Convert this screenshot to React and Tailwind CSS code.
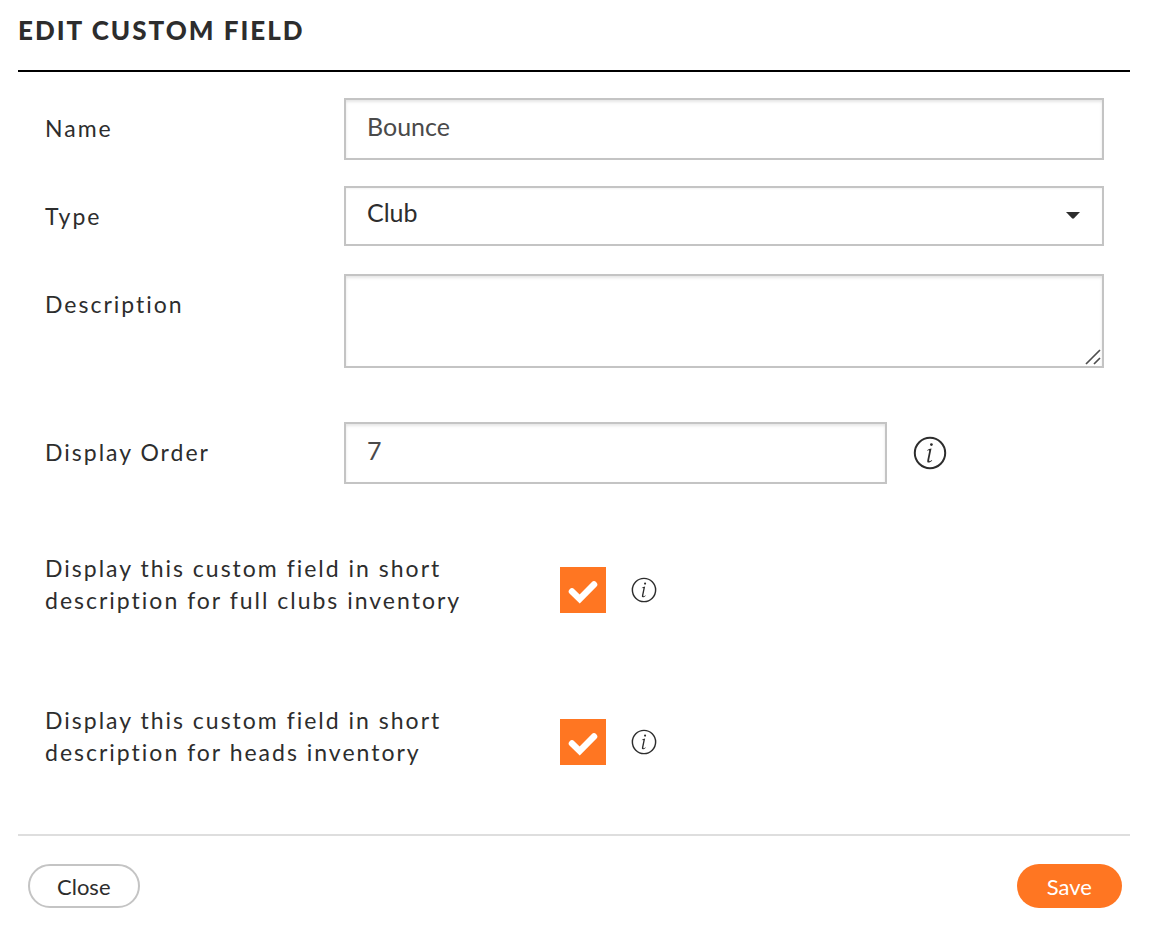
import React, { useState } from 'react';

const labelClass = 'shrink-0 text-[23px] leading-8 tracking-[2px] text-[#2d2d2d]';
const boxClass =
  'block w-full rounded-none border-2 border-[#c4c4c4] bg-white px-[21px] text-[25px] outline-none focus:border-[#ff7622]';

function InfoIcon({ large }) {
  return (
    <svg
      viewBox="0 0 34 34"
      className={large ? 'h-[34px] w-[34px]' : 'h-[26px] w-[26px]'}
      fill="none"
      stroke="#2d2d2d"
      strokeWidth={large ? 2 : 1.9}
      aria-hidden="true"
    >
      <circle cx="17" cy="17" r="15.2" />
      <circle cx="18.4" cy="8.6" r="1.4" fill="#2d2d2d" stroke="none" />
      <path
        d="M14 14.300c1.200-1.100 2.700-1.800 4.500-1.900L16.300 23.300c-.3 1.400-.1 1.900.4 1.900.7 0 1.400-.5 2.200-1.200l.3.500c-1.300 1.400-2.600 2.100-3.700 2.100-1.200 0-1.500-1-1.100-2.900l1.800-8.700c.1-.8-.3-.9-1.900-.2z"
        fill="#2d2d2d"
        stroke="none"
      />
    </svg>
  );
}

function InfoButton({ large }) {
  return (
    <button type="button" aria-label="More information" className="shrink-0 cursor-pointer">
      <InfoIcon large={large} />
    </button>
  );
}

function CheckRow({ id, label, checked, onChange }) {
  return (
    <div className="flex items-start">
      <label htmlFor={id} className={`${labelClass} w-[515px] pr-20`}>
        {label}
      </label>
      <div className="flex items-center gap-[25px] pt-[15px]">
        <span className="relative block h-[46px] w-[46px]">
          <input
            id={id}
            type="checkbox"
            checked={checked}
            onChange={(e) => onChange(e.target.checked)}
            className="block h-full w-full appearance-none border-2 border-[#c4c4c4] bg-white checked:border-[#ff7622] checked:bg-[#ff7622]"
          />
          {checked && (
            <svg viewBox="0 0 46 46" className="pointer-events-none absolute inset-0" fill="none" stroke="#fff" strokeWidth="6.5" aria-hidden="true">
              <path d="M12 24.500L19.700 32L34 17.500" strokeLinecap="round" />
            </svg>
          )}
        </span>
        <InfoButton />
      </div>
    </div>
  );
}

export default function App() {
  const [name, setName] = useState('Bounce');
  const [type, setType] = useState('Club');
  const [description, setDescription] = useState('');
  const [order, setOrder] = useState('7');
  const [inClubs, setInClubs] = useState(true);
  const [inHeads, setInHeads] = useState(true);

  return (
    <form
      onSubmit={(e) => e.preventDefault()}
      className="bg-white pt-3 pr-5 pb-5 pl-[18px] font-['Lato','Open_Sans',sans-serif] text-[#2d2d2d]"
    >
      <h1 className="border-b-2 border-black pb-[22px] text-[26px] leading-9 font-black tracking-[2px] uppercase">
        Edit Custom Field
      </h1>

      <div className="pt-[26px] pr-[26px] pl-[27px]">
        <div className="flex flex-col gap-[26px]">
          <div className="flex items-start">
            <label htmlFor="name" className={`${labelClass} w-[299px] pt-3.5`}>Name</label>
            <input
              id="name"
              type="text"
              value={name}
              onChange={(e) => setName(e.target.value)}
              className={`${boxClass} h-[62px] pb-1.5 text-[#4a4a4a] shadow-[inset_0_2px_3px_rgba(0,0,0,0.1)]`}
            />
          </div>

          <div className="flex items-start">
            <label htmlFor="type" className={`${labelClass} w-[299px] pt-3.5`}>Type</label>
            <div className="relative w-full">
              <select
                id="type"
                value={type}
                onChange={(e) => setType(e.target.value)}
                className={`${boxClass} h-[60px] appearance-none pb-1.5 text-[#2d2d2d] shadow-[inset_0_1px_2px_rgba(0,0,0,0.05)]`}
              >
                <option>Club</option>
              </select>
              <svg viewBox="0 0 14 7" className="pointer-events-none absolute top-[26px] right-6 h-[7px] w-3.5" fill="#2d2d2d" aria-hidden="true">
                <path d="M0 0h14L8 6.300Q7 7 6 6.300z" />
              </svg>
            </div>
          </div>
        </div>

        <div className="mt-7 flex items-start">
          <label htmlFor="description" className={`${labelClass} w-[299px] pt-3.5`}>Description</label>
          <div className="relative w-full">
            <textarea
              id="description"
              value={description}
              onChange={(e) => setDescription(e.target.value)}
              className={`${boxClass} h-[94px] resize-none py-3 text-[#4a4a4a] shadow-[inset_0_2px_3px_rgba(0,0,0,0.1)]`}
            />
            <svg viewBox="0 0 16 16" className="pointer-events-none absolute right-[3px] bottom-[3px] h-4 w-4" stroke="#4f4f4f" strokeWidth="1.7" aria-hidden="true">
              <path d="M1 15L15 1M9 15L15 9" />
            </svg>
          </div>
        </div>

        <div className="mt-[54px] flex items-start">
          <label htmlFor="order" className={`${labelClass} w-[299px] pt-3.5`}>Display Order</label>
          <div className="flex w-full items-center gap-[26px]">
            <div className="w-5/7">
              <input
                id="order"
                type="text"
                value={order}
                onChange={(e) => setOrder(e.target.value)}
                className={`${boxClass} h-[62px] pb-1.5 text-[#4a4a4a] shadow-[inset_0_2px_3px_rgba(0,0,0,0.1)]`}
              />
            </div>
            <InfoButton large />
          </div>
        </div>

        <div className="mt-[68px] flex flex-col gap-[88px]">
          <CheckRow
            id="in-clubs"
            label="Display this custom field in short description for full clubs inventory"
            checked={inClubs}
            onChange={setInClubs}
          />
          <CheckRow
            id="in-heads"
            label="Display this custom field in short description for heads inventory"
            checked={inHeads}
            onChange={setInHeads}
          />
        </div>
      </div>

      <div className="mt-[66px] flex items-center justify-between border-t-2 border-[#dedede] pt-7 pr-2 pl-2.5">
        <button type="button" className="h-11 cursor-pointer rounded-full border-2 border-[#c4c4c4] px-[27px] text-[22px]">
          Close
        </button>
        <button type="submit" className="h-11 cursor-pointer rounded-full bg-[#ff7622] px-[30px] text-[22px] text-white">
          Save
        </button>
      </div>
    </form>
  );
}
